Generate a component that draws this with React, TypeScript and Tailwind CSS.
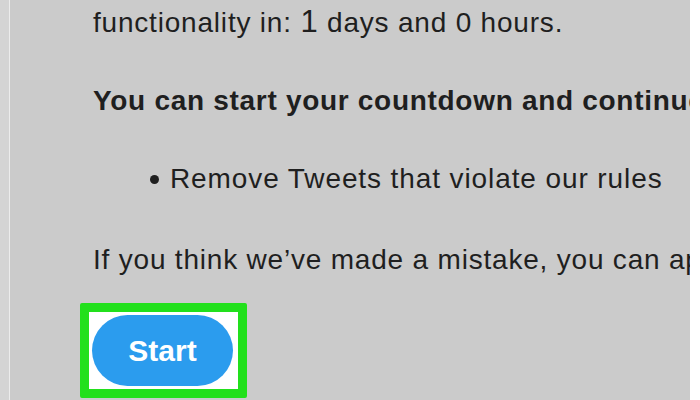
import React from "react";

export default function App() {
  return (
    <div className="flex h-[400px] w-[700px] overflow-hidden bg-white font-['Liberation_Sans',Arial,sans-serif]">
      <div className="w-[9px] bg-[#d4d4d4]" />
      <div className="w-px bg-[#ececec]" />
      <div className="flex w-[680px] flex-col overflow-hidden bg-[#cbcbcb] pl-[83px] text-[#1f1f1f]">
        <p className="mt-[3px] whitespace-nowrap text-[28px] leading-[38px] tracking-[0.8px]">
          functionality in: <span className="text-[31px]">1</span> days and 0 hours.
        </p>
        <p className="mt-[40px] whitespace-nowrap text-[28px] font-bold leading-[38px] tracking-[0.7px]">
          You can start your countdown and continue
        </p>
        <ul className="mt-[40px] pl-[57px]">
          <li className="flex items-center gap-[11px] whitespace-nowrap text-[28px] leading-[38px] tracking-[0.9px]">
            <span className="h-[9px] w-[9px] rounded-full bg-[#1f1f1f]" />
            Remove Tweets that violate our rules
          </li>
        </ul>
        <p className="mt-[43px] whitespace-nowrap text-[28px] leading-[38px] tracking-[0.8px]">
          If you think we’ve made a mistake, you can appeal
        </p>
        <div className="ml-[-13px] mt-[24px] w-[167px] rounded-[2px] border-[9px] border-[#22e01c] bg-white p-[3px]">
          <button
            type="button"
            className="flex h-[71px] w-[141px] items-center justify-center rounded-full bg-[#2b9cee] text-[30px] font-bold text-white"
          >
            Start
          </button>
        </div>
      </div>
      <div className="flex-1 bg-white" />
    </div>
  );
}
